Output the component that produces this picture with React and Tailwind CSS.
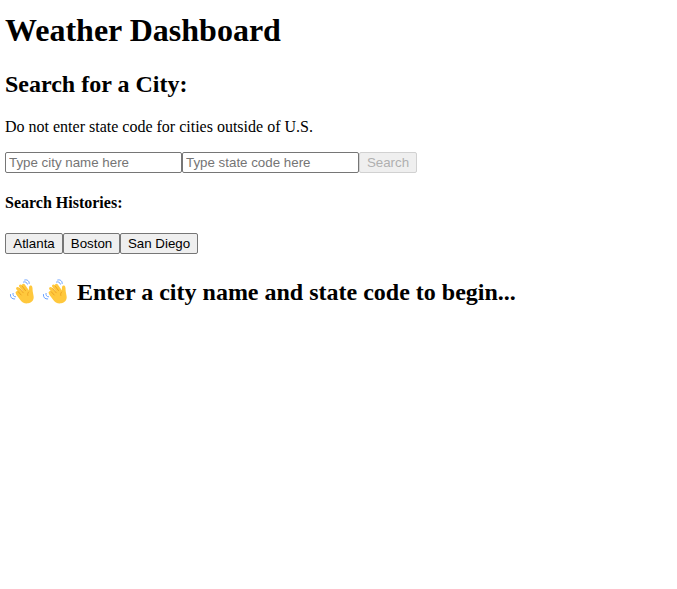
function Wave() {
  return (
    <svg className="h-[26px] w-[26px] shrink-0" viewBox="0 0 26 26" fill="none">
      <path d="M8.2 13.8L13 19M8.7 9.6L14 16M11.6 7.1L17 14M14.5 6.4L19 13" stroke="#ffc83d" strokeWidth="3.2" strokeLinecap="round" />
      <path d="M9.5 14L17.5 10.5L19.7 13C20.1 11.5 19.8 9.8 20 8.2C20.2 6.1 22.7 6 23.3 8C23.8 10 23.4 11.7 24 14L24.6 17.2C25.2 20.9 22.7 23.7 19.1 24.3C15.6 24.8 12.8 23.3 11.1 20.7L7.2 15.6L9.5 14Z" fill="#ffc83d" />
      <path d="M9.2 12.7L12.2 16M10.7 9.4L14.2 13.8M13.4 7.4L16.5 11.6M19.7 13C18.8 14 18.4 15.1 18.8 16.4" stroke="#e59618" strokeWidth=".75" strokeLinecap="round" />
      <path d="M14.5 3C16.2 2.4 18 3.3 18.4 5.1M15.7 1C18.4 .3 20.4 2 20.2 4.5M4 14.4C3.6 16.4 4.8 17.7 6.5 17.8M1.4 15.5C1.1 18.3 3 20.3 5.7 20" stroke="#6aa2ff" strokeWidth="1" strokeLinecap="round" />
    </svg>
  );
}

const histories = [
  { name: "Atlanta", width: "w-[58px]" },
  { name: "Boston", width: "w-[57px]" },
  { name: "San Diego", width: "w-[78px]" },
];

export default function App() {
  return (
    <main className="min-h-screen bg-white pl-[5px] pt-[12px] font-['Liberation_Serif',serif] text-black">
      <h1 className="h-[37px] text-[32px] leading-[37px] font-bold">Weather Dashboard</h1>
      <h2 className="mt-[21px] h-[28px] text-[24px] leading-[28px] font-bold">Search for a City:</h2>
      <p className="mt-[20px] h-[18px] text-[16px] leading-[18px]">Do not enter state code for cities outside of U.S.</p>
      <form className="mt-[16px] flex h-[21px] font-['Liberation_Sans',sans-serif] text-[13.333px]">
        <input placeholder="Type city name here" className="w-[177px] rounded-[2px] border border-[#767676] px-[3px] placeholder:text-[#757575]" />
        <input placeholder="Type state code here" className="w-[177px] rounded-[2px] border border-[#767676] px-[3px] placeholder:text-[#757575]" />
        <button disabled className="w-[58px] rounded-[2px] border border-[#d1d1d1] bg-[#efefef] text-[#b0b0b0]">Search</button>
      </form>
      <h4 className="mt-[21px] h-[18px] text-[16px] leading-[18px] font-bold">Search Histories:</h4>
      <div className="mt-[21px] flex h-[21px] font-['Liberation_Sans',sans-serif] text-[13.333px]">
        {histories.map(({ name, width }) => (
          <button key={name} className={`${width} whitespace-nowrap rounded-[2px] border border-[#767676] bg-[#efefef] leading-[19px]`}>{name}</button>
        ))}
      </div>
      <h2 className="mt-[24px] flex h-[28px] items-center pl-[4px] text-[24px] leading-[28px] font-bold">
        <Wave />
        <span className="w-[7px]" />
        <Wave />
        <span className="ml-[9px] whitespace-nowrap">Enter a city name and state code to begin...</span>
      </h2>
    </main>
  );
}
